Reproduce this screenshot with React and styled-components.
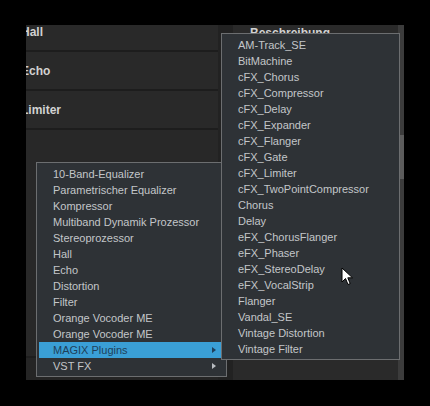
import React from "react";
import styled, { createGlobalStyle } from "styled-components";

const Global = createGlobalStyle`
  html, body { margin: 0; padding: 0; background: #000; }
  body { width: 430px; height: 406px; overflow: hidden; }
`;

const Stage = styled.div`
  position: relative;
  width: 430px;
  height: 406px;
  background: #000;
  padding: 25px 26px 0 26px;
  box-sizing: border-box;
  font-family: "Liberation Sans", Arial, sans-serif;
`;

const Panel = styled.div`
  width: 378px;
  height: 355px;
  display: flex;
  background: #282828;
  overflow: hidden;
`;

const NameCol = styled.div`
  width: 192px;
  display: flex;
  flex-direction: column;
`;

const Row = styled.div`
  box-sizing: border-box;
  height: ${(p) => p.$h}px;
  display: flex;
  align-items: ${(p) => (p.$top ? "flex-start" : "center")};
  border-bottom: 2px solid #1d1d1d;
  background: #292929;
  overflow: hidden;
`;

const RowName = styled.span`
  margin-left: -5px;
  margin-top: ${(p) => p.$mt || 0}px;
  font-weight: bold;
  font-size: 12px;
  color: #d2d2d2;
`;

const Filler = styled.div`
  flex: 1;
  display: flex;
  flex-direction: column;
  justify-content: flex-end;
`;

const BottomBar = styled.div`
  height: 22px;
  border-top: 2px solid #1e1e1e;
  background: #252525;
`;

const GapCol = styled.div`
  width: 15px;
  background: #222;
`;

const DescCol = styled.div`
  flex: 1;
  background: #2a2a2a;
  padding: 1px 0 0 17px;
`;

const DescHead = styled.div`
  font-size: 12px;
  font-weight: bold;
  color: #d2d2d2;
`;

const ScrollTrack = styled.div`
  width: 6px;
  background: #3c3c3c;
  display: flex;
  flex-direction: column;
  padding-top: 110px;
  box-sizing: border-box;
`;

const ScrollThumb = styled.div`
  height: 44px;
  background: #5c5c5c;
`;

const Menu = styled.div`
  position: absolute;
  left: ${(p) => p.$x}px;
  top: ${(p) => p.$y}px;
  width: ${(p) => p.$w}px;
  box-sizing: border-box;
  background: #2e3236;
  border: 1px solid #6c6e70;
  padding: ${(p) => p.$pt}px 2px ${(p) => p.$pb}px 2px;
  z-index: ${(p) => p.$z};
`;

const Item = styled.div`
  height: 16px;
  line-height: 16px;
  padding-left: 14px;
  padding-right: 8px;
  font-size: 11px;
  color: ${(p) => (p.$active ? "#1f3f5a" : "#c3c6c9")};
  background: ${(p) => (p.$active ? "#3a9fd6" : "transparent")};
  display: flex;
  justify-content: space-between;
  align-items: center;
  white-space: nowrap;
`;

const Arrow = styled.span`
  width: 0;
  height: 0;
  border-top: 3px solid transparent;
  border-bottom: 3px solid transparent;
  border-left: 4px solid ${(p) => (p.$active ? "#1f3f5a" : "#b8bcc0")};
`;

const Cursor = styled.svg`
  position: absolute;
  left: 341px;
  top: 267px;
  z-index: 10;
`;

const leftItems = [
  "10-Band-Equalizer",
  "Parametrischer Equalizer",
  "Kompressor",
  "Multiband Dynamik Prozessor",
  "Stereoprozessor",
  "Hall",
  "Echo",
  "Distortion",
  "Filter",
  "Orange Vocoder ME",
  "Orange Vocoder ME",
];

const rightItems = [
  "AM-Track_SE",
  "BitMachine",
  "cFX_Chorus",
  "cFX_Compressor",
  "cFX_Delay",
  "cFX_Expander",
  "cFX_Flanger",
  "cFX_Gate",
  "cFX_Limiter",
  "cFX_TwoPointCompressor",
  "Chorus",
  "Delay",
  "eFX_ChorusFlanger",
  "eFX_Phaser",
  "eFX_StereoDelay",
  "eFX_VocalStrip",
  "Flanger",
  "Vandal_SE",
  "Vintage Distortion",
  "Vintage Filter",
];

export default function App() {
  return (
    <>
      <Global />
      <Stage>
        <Panel>
          <NameCol>
            <Row $h={27} $top>
              <RowName $mt={0}>Hall</RowName>
            </Row>
            <Row $h={39}>
              <RowName>Echo</RowName>
            </Row>
            <Row $h={39}>
              <RowName>Limiter</RowName>
            </Row>
            <Filler>
              <BottomBar />
            </Filler>
          </NameCol>
          <GapCol />
          <DescCol>
            <DescHead>Beschreibung</DescHead>
          </DescCol>
          <ScrollTrack>
            <ScrollThumb />
          </ScrollTrack>
        </Panel>

        <Menu $x={36} $y={162} $w={191} $pt={3} $pb={2} $z={1}>
          {leftItems.map((t, i) => (
            <Item key={i}>{t}</Item>
          ))}
          <Item $active>
            MAGIX Plugins
            <Arrow $active />
          </Item>
          <Item>
            VST FX
            <Arrow />
          </Item>
        </Menu>

        <Menu $x={221} $y={33} $w={179} $pt={3} $pb={2} $z={2}>
          {rightItems.map((t, i) => (
            <Item key={i}>{t}</Item>
          ))}
        </Menu>

        <Cursor width="13" height="20" viewBox="0 0 13 20">
          <path
            d="M1 1 L1 15 L4.5 11.5 L7 17.5 L9.2 16.6 L6.8 10.8 L11.5 10.8 Z"
            fill="#fff"
            stroke="#000"
            strokeWidth="1"
            strokeLinejoin="miter"
          />
        </Cursor>
      </Stage>
    </>
  );
}
